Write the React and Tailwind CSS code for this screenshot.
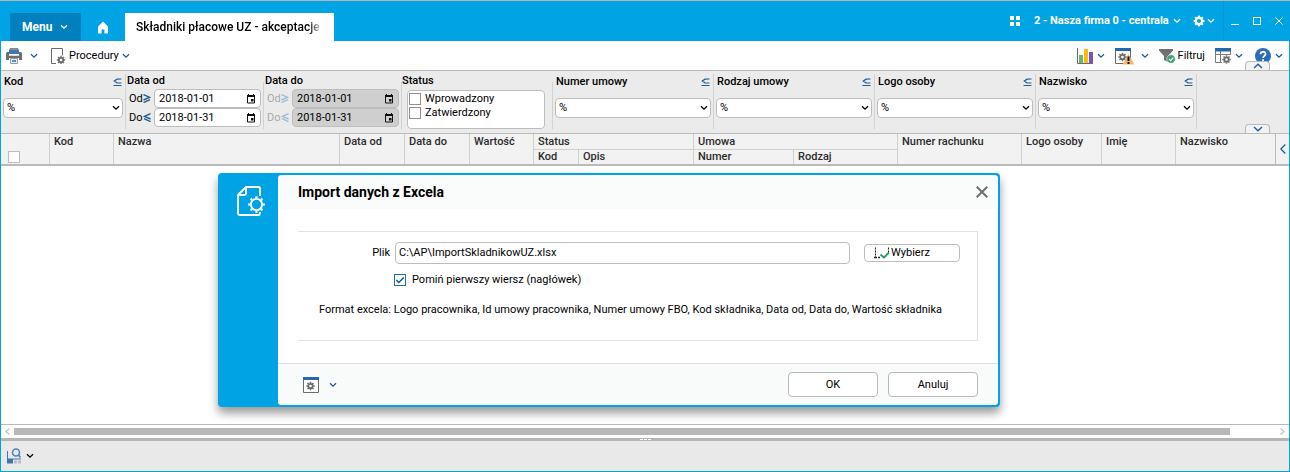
import { useState } from "react";

const companies = ["2 - Nasza firma 0 - centrala"];

const textFilters = [
    { id: "numer-umowy", label: "Numer umowy" },
    { id: "rodzaj-umowy", label: "Rodzaj umowy" },
    { id: "logo-osoby", label: "Logo osoby" },
    { id: "nazwisko", label: "Nazwisko" },
];

/* ---------- icons ---------- */

function Chevron({ className = "text-[#1f5c9c]" }) {
    return (
        <svg viewBox="0 0 8 6" className={`w-2 h-1.5 shrink-0 ${className}`} fill="none" stroke="currentColor" strokeWidth="1.3" aria-hidden="true">
            <path d="M1 1.2 4 4.2 7 1.2" />
        </svg>
    );
}

// Gear centred on cx/cy, used inside the other icons
function Gear({ cx, cy, r, width = 2, color = "#6b6b6b", tooth = 1.8 }) {
    return (
        <g transform={`translate(${cx} ${cy})`} stroke={color} fill="none">
            <circle r={r} strokeWidth={width} />
            {[0, 45, 90, 135, 180, 225, 270, 315].map((a) => (
                <path key={a} d={`M0 ${-r - width / 2 + 0.4}v-1.5`} strokeWidth={tooth} transform={`rotate(${a})`} />
            ))}
        </g>
    );
}

function HomeIcon() {
    return (
        <svg viewBox="0 0 12 13" className="w-3 h-[13px]" fill="#fff" aria-hidden="true">
            <path d="M6 0.5 1 5.5v7h3.6V8.6h2.8v3.9H11v-7z" />
        </svg>
    );
}

function TilesIcon() {
    return (
        <svg viewBox="0 0 10 10" className="w-2.5 h-2.5" fill="#fff" aria-hidden="true">
            <path d="M0 0h4v4H0zM6 0h4v4H6zM0 6h4v4H0zM6 6h4v4H6z" />
        </svg>
    );
}

function PrinterIcon() {
    return (
        <svg viewBox="0 0 16 16" className="w-4 h-4" aria-hidden="true">
            <path d="M4 0h8l1 2H3z" fill="#8a8a8a" />
            <path d="M3 2h10v4H3z" fill="#3e78b8" />
            <path d="M1 4h2v3h10V4h2l1 1v7h-3v-2H3v2H0V5z" fill="#6f6f6f" />
            <path d="M3 7.5h10" stroke="#dcdcdc" />
            <path d="M4.500 10.500h7v5h-7z" fill="#e4ebf3" stroke="#9a9a9a" />
            <path d="M6 12h4v2H6z" fill="#3e9be0" />
        </svg>
    );
}

function ProcedureIcon() {
    return (
        <svg viewBox="0 0 16 16" className="w-4 h-4" fill="none" aria-hidden="true">
            <path d="M6 15.5H1.5V.5h11v7" stroke="#6b6b6b" />
            <Gear cx={11} cy={12} r={2.2} width={1.8} tooth={1.5} />
        </svg>
    );
}

function ChartIcon() {
    return (
        <svg viewBox="0 0 16 16" className="w-4 h-4" aria-hidden="true">
            <path d="M.5 0v15.500H16" stroke="#6b6b6b" fill="none" />
            <path d="M2 7h4v8H2z" fill="#6ab869" />
            <path d="M7 1h4v14H7z" fill="#fbbb0c" />
            <path d="M12 4h4v11h-4z" fill="#7b52b9" />
        </svg>
    );
}

function SettingsWindowIcon({ warning }) {
    return (
        <svg viewBox={warning ? "0 0 20 17" : "0 0 16 16"} className={warning ? "w-5 h-[17px]" : "w-4 h-4"} fill="none" aria-hidden="true">
            <path d="M.5 3v12.500h15V3" fill="#fff" stroke="#6b6b6b" />
            <path d="M0 0h16v3H0z" fill="#2567ad" />
            <Gear cx={7.5} cy={9} r={2.2} width={1.8} tooth={1.5} />
            {warning && (
                <>
                    <path d="m13.500 6 6 10.500h-12z" fill="#f3ba68" />
                    <path d="M13.500 8.500v4.500m0 1v2" stroke="#111" strokeWidth="2" />
                </>
            )}
        </svg>
    );
}

function FilterIcon() {
    return (
        <svg viewBox="0 0 17 16" className="w-[17px] h-4" aria-hidden="true">
            <path d="M0 1h14v1.500L9 8v6l-4-2V8L0 2.500z" fill="#707070" />
            <circle cx="12" cy="11" r="4.300" fill="#3fa276" stroke="#fff" strokeWidth=".5" />
            <path d="m10 11 1.600 1.600 2.800-3" stroke="#fff" strokeWidth="1.200" fill="none" />
        </svg>
    );
}

function TableSettingsIcon() {
    return (
        <svg viewBox="0 0 16 16" className="w-4 h-4" fill="none" aria-hidden="true">
            <path d="M7 14.500H.5V3M15.500 3v4M5.500 3v11M0 6.500h15" stroke="#7b7b7b" />
            <path d="M0 0h16v3.500H0z" fill="#2567ad" />
            <Gear cx={11.5} cy={11.5} r={2.2} width={1.8} tooth={1.5} />
        </svg>
    );
}

function HelpIcon() {
    return (
        <svg viewBox="0 0 16 16" className="w-4 h-4" fill="none" aria-hidden="true">
            <circle cx="8" cy="8" r="8" fill="#2a6db5" />
            <path d="M5.500 6.200C5.500 3 10.500 3 10.500 6c0 1.800-2.400 1.900-2.400 4M8.100 11.200v1.800" stroke="#fff" strokeWidth="1.800" />
        </svg>
    );
}

function CalendarIcon() {
    return (
        <svg viewBox="0 0 10 10" className="w-2.5 h-2.5" aria-hidden="true">
            <path d="M1.500 1.500h7v7.500h-7z" fill="none" stroke="#111" />
            <path d="M1 1h8v2H1zM2 0h1v2H2zM7 0h1v2H7zM5 5h2.500v2.500H5z" fill="#111" />
        </svg>
    );
}

// Flat "less or equal" operator in the filter headings
function LessEqualIcon() {
    return (
        <svg viewBox="0 0 9 9" className="w-[9px] h-[9px]" fill="none" stroke="#1f5f96" strokeWidth="1.200" aria-hidden="true">
            <path d="M8.500 1 4 1.200 1.300 3l2.700 1.800 4.500.2M.5 7.500h8" />
        </svg>
    );
}

// Slanted comparison sign beside the date fields
function CompareIcon({ greater, muted }) {
    return (
        <svg viewBox="0 0 8 9" className="w-2 h-[9px]" fill="none" stroke={muted ? "#a0bdd4" : "#1f5f96"} strokeWidth="1.400" aria-hidden="true">
            {greater ? <path d="m.5.6 6 2.700-6 2.700M.5 8.600l6.500-2.900" /> : <path d="m7.500.6-6 2.700 6 2.700M7.500 8.600 1 5.700" />}
        </svg>
    );
}

function ImportIcon() {
    return (
        <svg viewBox="0 0 28 30" className="w-7 h-[30px]" fill="none" stroke="#fff" strokeWidth="1.900" aria-hidden="true">
            <path d="M23 10V2.500Q23 1 21.500 1H9L1 9v18.500Q1 29 2.500 29h19q1.500 0 1.500-3" />
            <path d="M9 1v6.500Q9 9 7.500 9H1" />
            <circle cx="19.500" cy="18.500" r="5.600" />
            {[0, 45, 90, 135, 180, 225, 270, 315].map((a) => (
                <path key={a} d="M19.500 12.500v-2.300" strokeWidth="2.200" transform={`rotate(${a} 19.500 18.500)`} />
            ))}
        </svg>
    );
}

function PickIcon() {
    return (
        <svg viewBox="0 0 16 12" className="w-4 h-3" fill="none" aria-hidden="true">
            <path d="M1.500.5V11M14.500.5V7" stroke="#222" strokeDasharray="2 1" />
            <path d="M0 10.500h6" stroke="#222" strokeWidth="1.500" strokeDasharray="3 1" />
            <path d="m6.500 7.500 3.500 3 5-5" stroke="#219a68" strokeWidth="1.800" />
        </svg>
    );
}

function PreviewIcon() {
    return (
        <svg viewBox="0 0 14 16" className="w-3.5 h-4" fill="none" aria-hidden="true">
            <path d="M.5 3v12M0 11h14" stroke="#3f74b7" />
            <path d="M0 11h6v4.500H0z" fill="#3f74b7" />
            <path d="M7 12.500h3v3H7zM11 12.500h3v3h-3z" fill="#bdbdbd" />
            <circle cx="9" cy="4.500" r="3.500" stroke="#4f84c0" strokeWidth="1.600" />
            <path d="m11.500 7 2 2.500" stroke="#4f84c0" strokeWidth="1.800" />
        </svg>
    );
}

/* ---------- page parts ---------- */

function TopBar() {
    return (
        <header className="flex h-10 bg-[#00a3e3] text-white">
            <nav className="flex items-end ml-2.5">
                <button type="button" className="flex items-center gap-2 w-[71px] h-7 px-3 bg-[#0080bf] text-[12px] font-bold">
                    Menu <Chevron className="text-white" />
                </button>
                <a href="#start" aria-label="Start" className="flex items-center justify-center w-11 h-7">
                    <HomeIcon />
                </a>
                <a href="#skladniki" className="flex items-center w-[209px] h-7 px-[11px] bg-white text-black text-[12px] font-medium">
                    <span className="overflow-hidden whitespace-nowrap w-full [mask-image:linear-gradient(to_right,black_92%,transparent)]">
                        Składniki płacowe UZ - akceptacje
                    </span>
                </a>
            </nav>
            <div className="flex items-center ml-auto">
                <button type="button" aria-label="Aplikacje" className="mr-3.5">
                    <TilesIcon />
                </button>
                <div className="relative flex items-center">
                    <select aria-label="Firma" className="appearance-none bg-transparent pr-3 text-[11px] font-bold">
                        {companies.map((c) => <option key={c}>{c}</option>)}
                    </select>
                    <Chevron className="text-white absolute right-0 pointer-events-none" />
                </div>
                <button type="button" aria-label="Ustawienia" className="flex items-center gap-0.5 ml-3 mr-2">
                    <svg viewBox="0 0 12 12" className="w-3 h-3" aria-hidden="true">
                        <Gear cx={6} cy={6} r={3.2} width={2.2} color="#fff" tooth={2.2} />
                    </svg>
                    <Chevron className="text-white" />
                </button>
                <div className="flex items-center gap-3.5 h-full px-[7px] border-l border-[#0b94cf]">
                    <button type="button" aria-label="Minimalizuj" className="w-2 h-2 border-b border-white" />
                    <button type="button" aria-label="Maksymalizuj" className="w-2 h-2 border border-white" />
                    <button type="button" aria-label="Zamknij">
                        <svg viewBox="0 0 8 8" className="w-2 h-2" stroke="#fff" aria-hidden="true">
                            <path d="m.5.5 7 7m0-7-7 7" />
                        </svg>
                    </button>
                </div>
            </div>
        </header>
    );
}

function ToolBar() {
    return (
        <div className="relative flex items-center h-[29px] pt-px pl-[5px] pr-1.5 bg-white">
            <button type="button" aria-label="Drukuj" className="flex items-center gap-2">
                <PrinterIcon />
                <Chevron />
            </button>
            <button type="button" className="flex items-center gap-[3px] ml-3">
                <ProcedureIcon />
                Procedury
                <Chevron />
            </button>
            <div className="flex items-center ml-auto">
                <button type="button" aria-label="Wykresy" className="flex items-center gap-1 mr-2.5">
                    <ChartIcon />
                    <Chevron />
                </button>
                <button type="button" aria-label="Parametry" className="flex items-center gap-1.5 mr-2.5">
                    <SettingsWindowIcon warning />
                    <Chevron />
                </button>
                <button type="button" className="flex items-center gap-0.5 mr-2.5">
                    <FilterIcon />
                    Filtruj
                </button>
                <button type="button" aria-label="Widok" className="flex items-center gap-1 mr-3">
                    <TableSettingsIcon />
                    <Chevron />
                </button>
                <button type="button" aria-label="Pomoc" className="flex items-center gap-1">
                    <HelpIcon />
                    <Chevron />
                </button>
            </div>
            <PanelTab up />
        </div>
    );
}

// Small handle that folds the filter panel
function PanelTab({ up }) {
    return (
        <button
            type="button"
            aria-label={up ? "Zwiń filtry" : "Rozwiń filtry"}
            className="absolute bottom-0 right-[19px] flex items-center justify-center w-[25px] h-[9px] rounded-t border border-b-0 border-[#b9b9b9] bg-[#f3f3f3]"
        >
            <svg viewBox="0 0 10 6" className="w-2.5 h-1.5" fill="none" stroke="#1f5f9f" strokeWidth="1.400" aria-hidden="true">
                <path d={up ? "M1 5 5 1.200 9 5" : "M1 1l4 3.800L9 1"} />
            </svg>
        </button>
    );
}

function TextFilter({ id, label, className }) {
    return (
        <div className={`px-0.5 border-r border-[#d2d2d2] ${className}`}>
            <div className="flex items-center justify-between h-4 px-px">
                <label htmlFor={id} className="font-medium">{label}</label>
                <LessEqualIcon />
            </div>
            <div className="relative flex items-center mt-2">
                <select id={id} className="appearance-none w-full h-5 px-[3px] rounded-sm border border-[#bdbdbd] bg-white">
                    <option>%</option>
                </select>
                <Chevron className="text-black absolute right-[3px] pointer-events-none" />
            </div>
        </div>
    );
}

function DateFilter({ id, label, disabled }) {
    const rows = [
        { key: "od", text: "Od", value: "2018-01-01" },
        { key: "do", text: "Do", value: "2018-01-31" },
    ];
    return (
        <fieldset disabled={disabled} className="w-[138px] pr-0.5 border-r border-[#d2d2d2]">
            <legend className="h-[15px] pl-px font-medium">{label}</legend>
            {rows.map((row) => (
                <div key={row.key} className="flex items-center pl-[3px]">
                    <label htmlFor={`${id}-${row.key}`} className={`flex items-center w-[25px] ${disabled ? "text-[#a9a9a9]" : ""}`}>
                        {row.text}
                        <CompareIcon greater={row.key === "od"} muted={disabled} />
                    </label>
                    <div className={`flex items-center flex-1 h-[19px] pr-1 rounded-sm border border-[#bdbdbd] ${disabled ? "bg-[#cfcfcf]" : "bg-white"}`}>
                        <input id={`${id}-${row.key}`} type="text" defaultValue={row.value} className="w-full min-w-0 px-1 bg-transparent" />
                        <button type="button" aria-label="Kalendarz">
                            <CalendarIcon />
                        </button>
                    </div>
                </div>
            ))}
        </fieldset>
    );
}

function StatusFilter() {
    return (
        <fieldset className="w-[151px] border-r border-[#d2d2d2]">
            <legend className="h-4 font-medium">Status</legend>
            <div className="ml-[5px] w-[138px] h-[39px] px-px py-px rounded-sm border border-[#bdbdbd] bg-white">
                {["Wprowadzony", "Zatwierdzony"].map((s) => (
                    <label key={s} className="flex items-center gap-1 h-3.5">
                        <input type="checkbox" className="appearance-none w-3 h-3 border border-[#8f8f8f] bg-white checked:bg-[#1f5f96]" />
                        {s}
                    </label>
                ))}
            </div>
        </fieldset>
    );
}

function FilterPanel() {
    return (
        <section className="relative flex h-16 pt-[3px] pb-1 border-y border-[#bababa] bg-[#ebebeb]">
            <TextFilter id="kod" label="Kod" className="w-[125px]" />
            <DateFilter id="data-od" label="Data od" />
            <DateFilter id="data-do" label="Data do" disabled />
            <StatusFilter />
            {textFilters.map((f) => (
                <TextFilter key={f.id} id={f.id} label={f.label} className="w-[161px]" />
            ))}
            <PanelTab />
        </section>
    );
}

function Th({ children, sub, ...rest }) {
    return (
        <th
            {...rest}
            className={`px-1 text-left align-top font-medium text-[#2b2b2b] border-r border-[#d0d0d0] ${sub ? "border-t leading-[14px]" : "leading-[15px]"}`}
        >
            {children}
        </th>
    );
}

function GridHeader() {
    return (
        <div className="flex border-b-2 border-[#bababa] bg-[#f2f2f2]">
            <table className="flex-1 w-full table-fixed border-separate border-spacing-0">
                <colgroup>
                    <col className="w-[49px]" />
                    <col className="w-16" />
                    <col className="w-[226px]" />
                    <col className="w-[65px]" />
                    <col className="w-[65px]" />
                    <col className="w-16" />
                    <col className="w-[45px]" />
                    <col className="w-[115px]" />
                    <col className="w-[100px]" />
                    <col className="w-[104px]" />
                    <col className="w-[124px]" />
                    <col className="w-20" />
                    <col className="w-[74px]" />
                    <col />
                </colgroup>
                <thead>
                    <tr className="h-[15px]">
                        <th rowSpan={2} className="pl-[7px] text-left align-bottom border-r border-[#d0d0d0]">
                            <input type="checkbox" aria-label="Zaznacz wszystkie" className="block appearance-none w-3 h-3 mb-px border border-[#bdbdbd] bg-white" />
                        </th>
                        <Th rowSpan={2}>Kod</Th>
                        <Th rowSpan={2}>Nazwa</Th>
                        <Th rowSpan={2}>Data od</Th>
                        <Th rowSpan={2}>Data do</Th>
                        <Th rowSpan={2}>Wartość</Th>
                        <Th colSpan={2}>Status</Th>
                        <Th colSpan={2}>Umowa</Th>
                        <Th rowSpan={2}>Numer rachunku</Th>
                        <Th rowSpan={2}>Logo osoby</Th>
                        <Th rowSpan={2}>Imię</Th>
                        <th rowSpan={2} className="px-1 text-left align-top font-medium text-[#2b2b2b] leading-[15px]">Nazwisko</th>
                    </tr>
                    <tr className="h-[15px]">
                        <Th sub>Kod</Th>
                        <Th sub>Opis</Th>
                        <Th sub>Numer</Th>
                        <Th sub>Rodzaj</Th>
                    </tr>
                </thead>
            </table>
            <button type="button" aria-label="Panel boczny" className="flex items-center justify-center w-3.5 border-l border-[#bababa]">
                <svg viewBox="0 0 6 10" className="w-1.5 h-2.5" fill="none" stroke="#1f5f9f" strokeWidth="1.300" aria-hidden="true">
                    <path d="M5.300.5.8 5l4.500 4.500" />
                </svg>
            </button>
        </div>
    );
}

function ImportDialog() {
    const [path, setPath] = useState("C:\\AP\\ImportSkladnikowUZ.xlsx");
    const [skipHeader, setSkipHeader] = useState(true);

    return (
        <div
            role="dialog"
            aria-labelledby="import-title"
            className="absolute top-[7px] left-[217px] flex w-[782px] rounded border-2 border-[#00a3e3] bg-[#00a3e3] shadow-[0_6px_10px_rgba(0,0,0,0.4)]"
        >
            <div className="flex justify-center w-[58px] pt-[11px] pl-1">
                <ImportIcon />
            </div>
            <div className="flex-1 rounded-sm bg-white overflow-hidden">
                <div className="flex items-center justify-between h-[34px] pl-5 pr-2.5 bg-[#fafcfb]">
                    <h2 id="import-title" className="text-[14px] font-bold">Import danych z Excela</h2>
                    <button type="button" aria-label="Zamknij okno">
                        <svg viewBox="0 0 12 12" className="w-3 h-3" stroke="#6f6f6f" strokeWidth="2" aria-hidden="true">
                            <path d="m.7.7 10.600 10.600m0-10.600L.7 11.300" />
                        </svg>
                    </button>
                </div>

                <div className="h-[110px] mx-5 mt-[22px] mb-[22px] pt-2.5 border-y border-r border-[#e2e2e2]">
                    <div className="flex items-center pr-[17px]">
                        <label htmlFor="plik" className="w-[97px] pr-[5px] text-right">Plik</label>
                        <input
                            id="plik"
                            type="text"
                            value={path}
                            onChange={(e) => setPath(e.target.value)}
                            className="flex-1 h-[22px] px-[3px] pb-px rounded-sm border border-[#bdbdbd] bg-white"
                        />
                        <button type="button" className="flex items-center gap-px w-24 h-[18px] ml-3.5 pl-[9px] rounded-sm border border-[#bdbdbd] bg-white">
                            <PickIcon />
                            Wybierz
                        </button>
                    </div>
                    <label className="flex items-center gap-1.5 h-3.5 ml-24 mt-[9px]">
                        <span className="relative flex">
                            <input
                                type="checkbox"
                                checked={skipHeader}
                                onChange={(e) => setSkipHeader(e.target.checked)}
                                className="appearance-none w-3 h-3 border border-[#1f6ea8] bg-white"
                            />
                            {skipHeader && (
                                <svg viewBox="0 0 12 12" className="absolute inset-0 w-3 h-3 pointer-events-none" fill="none" stroke="#1f5484" strokeWidth="1.500" aria-hidden="true">
                                    <path d="m2.300 6 2.500 2.500 5-5" />
                                </svg>
                            )}
                        </span>
                        Pomiń pierwszy wiersz (nagłówek)
                    </label>
                    <p className="mt-4 ml-[21px] whitespace-nowrap">
                        Format excela: Logo pracownika, Id umowy pracownika, Numer umowy FBO, Kod składnika, Data od, Data do, Wartość składnika
                    </p>
                </div>

                <div className="flex items-center h-[42px] pl-[25px] pr-5 border-t border-[#e0e0e0] bg-[#f9fbfb]">
                    <button type="button" aria-label="Opcje" className="flex items-center gap-2.5">
                        <SettingsWindowIcon />
                        <Chevron />
                    </button>
                    <div className="flex gap-2.5 ml-auto">
                        <button type="button" className="w-[90px] h-[25px] rounded-sm border border-[#bababa] bg-white">OK</button>
                        <button type="button" className="w-[90px] h-[25px] rounded-sm border border-[#bababa] bg-white">Anuluj</button>
                    </div>
                </div>
            </div>
        </div>
    );
}

function ScrollArrow({ right }) {
    return (
        <svg viewBox="0 0 5 7" className="w-[5px] h-[7px]" fill="none" stroke="#c4c4c4" strokeWidth="1.300" aria-hidden="true">
            <path d={right ? "m.5.500 3.500 3-3.500 3" : "m4.500.500-3.500 3 3.500 3"} />
        </svg>
    );
}

function BottomBar() {
    return (
        <footer>
            <div className="flex items-center h-3.5 px-1 border-t border-[#bababa] bg-white">
                <ScrollArrow />
                <div className="flex-1 h-[7px] ml-1 mr-[50px] bg-[#b8b8b8]" />
                <ScrollArrow right />
            </div>
            <div className="flex items-center justify-center gap-px h-[3px] bg-[#b5b5b5]">
                <span className="w-[3px] h-px bg-white" />
                <span className="w-[3px] h-px bg-white" />
                <span className="w-[3px] h-px bg-white" />
            </div>
            <div className="flex items-center h-[30px] pl-1.5 bg-[#e9e9e9]">
                <button type="button" aria-label="Podgląd" className="flex items-center gap-[5px]">
                    <PreviewIcon />
                    <Chevron className="text-black" />
                </button>
            </div>
        </footer>
    );
}

export default function App() {
    return (
        <div className="flex flex-col min-h-screen border-t border-[#b5b5b5] bg-[#00a3e3] text-black text-[11px] leading-[14px] font-['Roboto',sans-serif]">
            <TopBar />
            <div className="flex flex-col flex-1 mx-px mb-px bg-white">
                <ToolBar />
                <FilterPanel />
                <GridHeader />
                <main className="relative flex-1">
                    <ImportDialog />
                </main>
                <BottomBar />
            </div>
        </div>
    );
}
